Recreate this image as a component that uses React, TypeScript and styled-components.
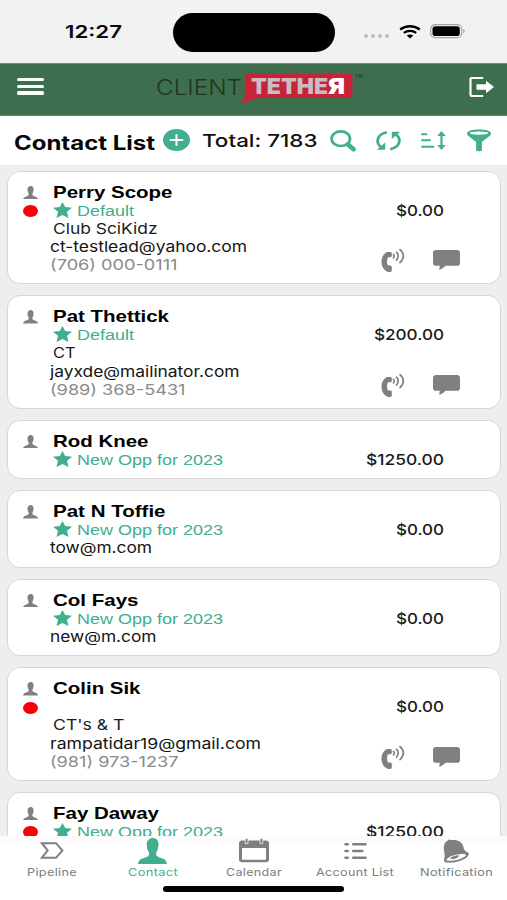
import React, { useLayoutEffect, useRef, useState } from 'react';
import styled, { createGlobalStyle, css } from 'styled-components';

const TEAL = '#41ae8f';
const GRAY = '#808080';

const GlobalStyle = createGlobalStyle`
  *, *::before, *::after { box-sizing: border-box; }
  body { margin: 0; background: #eeeeee; font-family: Inter, "Liberation Sans", sans-serif; }
  svg { display: block; flex: none; }
`;

/* ---------- text set to a fixed measure ---------- */

const Measure = styled.span<{ $w: number }>`
  display: block;
  width: ${(p) => p.$w}px;
  white-space: nowrap;
  flex: none;
`;

const Stretch = styled.span`
  display: inline-block;
  transform-origin: 0 50%;
  white-space: pre;
`;

function Fit({ w, children, className }: { w: number; children: React.ReactNode; className?: string }) {
  const ref = useRef<HTMLSpanElement>(null);
  const [scale, setScale] = useState(1);
  useLayoutEffect(() => {
    if (ref.current && ref.current.offsetWidth) {
      const natural = parseFloat(getComputedStyle(ref.current).width);
      setScale(w / natural);
    }
  }, [w]);
  return (
    <Measure $w={w} className={className}>
      <Stretch ref={ref} style={{ transform: `scaleX(${scale})` }}>{children}</Stretch>
    </Measure>
  );
}

/* ---------- layout ---------- */

const Phone = styled.div`
  width: 507px;
  height: 900px;
  display: flex;
  flex-direction: column;
  overflow: hidden;
  background: #eeeeee;
  color: #111;
`;

const StatusBar = styled.div`
  height: 63px;
  flex: none;
  display: flex;
  align-items: center;
  background: #f2f2f2;
  padding-left: 65px;
`;

const Clock = styled(Fit)`
  font-size: 17.5px;
  font-weight: 600;
  line-height: 24px;
  margin-top: 1px;
  color: #0a0a0a;
`;

const Island = styled.div`
  width: 162px;
  height: 39px;
  margin-left: 51px;
  margin-top: 1px;
  border-radius: 20px;
  background: #000;
`;

const StatusIcons = styled.div`
  display: flex;
  align-items: center;
  margin-left: 28px;
`;

const Dots = styled.div`
  display: flex;
  gap: 2.8px;
  margin: 9px 9.5px 0 1px;
`;

const Dot = styled.i`
  width: 4.2px;
  height: 4px;
  border-radius: 50%;
  background: #bdbdbd;
`;

const Header = styled.header`
  height: 53px;
  flex: none;
  display: flex;
  align-items: flex-start;
  background: #3d6f4e;
  border-top: 1px solid #6d967b;
  border-bottom: 1px solid #62896f;
  padding: 0 13px 0 17px;
`;

const MenuButton = styled.div`
  width: 27px;
  margin-top: 14px;
  display: grid;
  gap: 3.2px;
`;

const MenuLine = styled.i`
  height: 3.4px;
  border-radius: 1.5px;
  background: #fff;
`;

const Logo = styled.div`
  display: flex;
  align-items: flex-start;
  margin-left: 111.5px;
`;

const LogoClient = styled(Fit)`
  margin-top: 8.5px;
  font-size: 22px;
  font-weight: 300;
  line-height: 28px;
  color: #26331f;
`;

const LogoBubble = styled.div`
  display: grid;
  margin: 9px 0 0 -3px;
  > * { grid-area: 1 / 1; }
`;

const LogoTether = styled.div`
  display: flex;
  padding: 0 0 0 12.5px;
  font-size: 21.5px;
  line-height: 27px;
  font-weight: 900;
  color: #c8bcc6;
`;

const LogoLetter = styled(Fit)`
  color: #fff;
`;

const Trademark = styled(Fit)`
  margin: 9px 0 0 1px;
  font-size: 5px;
  font-weight: 600;
  line-height: 6px;
  color: #27432f;
`;

const HeaderAction = styled.div`
  margin: 11.5px 0 0 auto;
`;

const Toolbar = styled.div`
  height: 49px;
  flex: none;
  display: flex;
  align-items: center;
  background: #fff;
  padding-left: 14px;
`;

const Title = styled(Fit)`
  font-size: 19.4px;
  font-weight: 700;
  line-height: 24px;
  margin-top: 4px;
  color: #050505;
`;

const Total = styled(Fit)`
  font-size: 17.8px;
  font-weight: 500;
  line-height: 24px;
  margin-left: 12px;
  color: #111;
`;

const Tool = styled.div<{ $gap: number }>`
  margin-left: ${(p) => p.$gap}px;
`;

const List = styled.main`
  flex: 1;
  min-height: 0;
  overflow: hidden;
  display: flex;
  flex-direction: column;
  gap: 11.1px;
  padding: 5.5px 6.5px 0 7px;
`;

const Card = styled.article`
  flex: none;
  display: flex;
  border: 1.4px solid #d6d6d6;
  border-radius: 13px;
  background: #fff;
  padding: 11px 0 9px 14.5px;
`;

const Marks = styled.div`
  width: 28px;
  padding: 3px 0 0 0.5px;
  display: flex;
  flex-direction: column;
  gap: 6px;
`;

const Unread = styled.i`
  width: 14.5px;
  height: 12px;
  border-radius: 50%;
  background: #fb0007;
`;

const Info = styled.div`
  width: 290px;
`;

const Name = styled(Fit)`
  height: 19.2px;
  padding-left: 2px;
  font: 700 17px/19px "Liberation Sans", Arial, sans-serif;
  color: #000;
`;

const line = css`
  height: 18.1px;
  font-size: 14.8px;
  line-height: 18px;
`;

const Stage = styled.div`
  ${line}
  display: flex;
  gap: 5px;
  padding-left: 2px;
  color: ${TEAL};
`;

const StageLabel = styled(Fit)`
  font: 400 15.2px/18px "Liberation Sans", Arial, sans-serif;
`;

const Company = styled(Fit)`
  ${line}
  padding-left: 2px;
  color: #1c1c1c;
`;

const Email = styled(Fit)`
  ${line}
  margin-left: -1px;
  color: #141414;
`;

const PhoneNumber = styled(Fit)`
  ${line}
  margin-left: -1px;
  color: #8a8a8a;
`;

const Side = styled.div`
  flex: 1;
  padding-top: 19px;
`;

const Amount = styled(Fit)`
  font-size: 14.8px;
  font-weight: 500;
  line-height: 18px;
  margin-left: auto;
  margin-right: 55.5px;
  color: #1a1a1a;
`;

const Actions = styled.div`
  display: flex;
  align-items: flex-start;
  justify-content: flex-end;
  gap: 27px;
  padding-right: 39.5px;
  margin-top: 28.5px;
  height: 0;
`;

const ChatAction = styled.div`
  margin-top: 2px;
`;

const TabBar = styled.nav`
  height: 64px;
  flex: none;
  background: linear-gradient(#fafafa, #fff 12px);
  display: flex;
  flex-direction: column;
  align-items: center;
`;

const Tabs = styled.div`
  width: 100%;
  height: 50px;
  display: grid;
  grid-template-columns: repeat(5, 1fr);
  padding-left: 1px;
`;

const Tab = styled.div<{ $active?: boolean }>`
  display: flex;
  flex-direction: column;
  align-items: center;
  color: ${(p) => (p.$active ? TEAL : '#7b7b7b')};
`;

const TabIcon = styled.div`
  height: 29px;
  display: flex;
  align-items: center;
`;

const TabLabel = styled(Fit)`
  font: 400 10.9px/14px Inter, sans-serif;
  letter-spacing: 0.3px;
  color: inherit;
`;

const HomeIndicator = styled.div`
  width: 181px;
  height: 5.5px;
  border-radius: 3px;
  background: #000;
`;

/* ---------- icons ---------- */

const Person = ({ w, h, fill }: { w: number; h: number; fill: string }) => (
  <svg width={w} height={h} viewBox="0 0 29 26" preserveAspectRatio="none" fill={fill}>
    <path d="M15 0c3.600 0 5.500 2.800 5.500 6.300 0 3.600-.9 6.200-2.300 8.100v2.200c0 1.500 1.200 2.200 3.400 2.900 4.200 1.200 6.900 2.300 7.400 6.500H0c.5-4.200 3.200-5.300 7.400-6.500 2.300-.7 3.600-1.400 3.600-2.900v-2.200C9.500 12.500 8.700 10 8.700 6.300 8.700 2.500 11.400 0 15 0z" />
  </svg>
);

const Star = () => (
  <svg width="19" height="16" viewBox="0 0 19 16" fill={TEAL}>
    <path d="M9.500 0l2.700 5 6.800.7-5 4.100 1.500 6.100-6-2.900-6 2.900L5 9.800 0 5.700 6.800 5z" />
  </svg>
);

const CallIcon = () => (
  <svg width="25" height="25" viewBox="0 0 25 25" fill="none">
    <path d="M6 4h3.300c.9 0 1.500.7 1.500 1.500v2.300c0 .9-.8 1.500-1.600 1.500H7c-1.300 2.300-1.300 6 0 8.200h2.200c.9 0 1.600.7 1.600 1.500v3.200c0 1-.7 1.700-1.700 1.700H7C-1.500 21-1.500 7.500 6 4z" fill={GRAY} />
    <path d="M12.500 6.300c1 .9 1 2.500 0 3.600M15.500 4.200c2.200 2 2.200 5.500 0 7.900M19 1.600c4.400 3.600 4.400 9.200 0 13" stroke={GRAY} strokeWidth="1.700" strokeLinecap="round" />
  </svg>
);

const ChatIcon = () => (
  <svg width="27" height="20" viewBox="0 0 27 20" fill={GRAY}>
    <path d="M3 0h21c1.700 0 3 1 3 2.600v10.600c0 1.600-1.300 2.600-3 2.600H12.500C10.500 18 8.500 19 6.300 20l.4-4.200H3c-1.700 0-3-1-3-2.600V2.600C0 1 1.300 0 3 0z" />
  </svg>
);

const Wifi = () => (
  <svg width="22" height="14" viewBox="0 0 22 14" fill="none" stroke="#000">
    <path d="M1.200 4.500c5.600-4.400 14-4.400 19.600 0" strokeWidth="2.400" />
    <path d="M4.800 7.900c3.600-2.700 8.800-2.700 12.400 0" strokeWidth="2.300" />
    <path d="M7.700 10.500c1.900-1.500 4.700-1.500 6.600 0L11 13.500z" fill="#000" stroke="none" />
  </svg>
);

const Battery = () => (
  <svg width="36" height="15" viewBox="0 0 36 15">
    <rect x=".7" y=".7" width="31" height="13" rx="4.300" fill="none" stroke="#a5a5a5" strokeWidth="1.200" />
    <rect x="2.500" y="2.300" width="27.300" height="9.800" rx="2.800" fill="#000" />
    <path d="M33.300 5.200c1.800.4 1.800 3.600 0 4z" fill="#999" />
  </svg>
);

const Bubble = () => (
  <svg width="115" height="32" viewBox="0 0 115 32">
    <path d="M8.500 1h102c2 0 3 1 3 3v18c0 2-1 3-3 3H19C13 27 7 29 0 31c4-3 6-6 5.800-10V3c0-1.300.7-2 2.700-2z" fill="#c82336" />
  </svg>
);

const Logout = () => (
  <svg width="25" height="22" viewBox="0 0 25 22" fill="none">
    <path d="M14.200 2H2.800C2 2 1.500 2.500 1.500 3.200v15.600c0 .7.500 1.200 1.300 1.200h11.400" stroke="#fff" strokeWidth="2.200" />
    <path d="M7.500 8.200h9.500V4.800L25 11l-8 6.200v-3.400H7.500z" fill="#fff" />
  </svg>
);

const Add = () => (
  <svg width="27" height="23" viewBox="0 0 27 23">
    <ellipse cx="13.500" cy="11" rx="13.500" ry="11" fill={TEAL} />
    <path d="M6.800 11h13.400M13.500 5.200v11.600" stroke="#fff" strokeWidth="2" />
  </svg>
);

const Search = () => (
  <svg width="26" height="22" viewBox="0 0 26 22" fill="none" stroke={TEAL}>
    <ellipse cx="10.800" cy="8.700" rx="9.200" ry="7.300" strokeWidth="2.700" />
    <path d="M18 14.500l5.500 4.700" strokeWidth="4.600" strokeLinecap="round" />
  </svg>
);

const Sync = () => (
  <svg width="25" height="20" viewBox="0 0 25 20" fill="none">
    <path d="M10.800 1.300C.7 3.500-1 11.500 5.500 16.500M14.200 18.200C24.300 16 26 8 19.500 3" stroke={TEAL} strokeWidth="2.700" />
    <path d="M9.200 11.500v7.300H.8zM15.800 8V.7h8.400z" fill={TEAL} />
  </svg>
);

const Sort = () => (
  <svg width="25" height="19" viewBox="0 0 25 19" fill="none">
    <path d="M1 3.200h4.500M1 9.300h8M1 15.800h11.500" stroke={TEAL} strokeWidth="1.900" strokeLinecap="round" />
    <path d="M20.500 3v13" stroke={TEAL} strokeWidth="2.200" />
    <path d="M20.500 0l4.300 5h-8.600zM20.500 19l4.300-5h-8.600z" fill={TEAL} />
  </svg>
);

const Funnel = () => (
  <svg width="24" height="23" viewBox="0 0 24 23">
    <path d="M0 4.500C0 2 5 .5 12 .5s12 1.500 12 4c0 1-.6 1.700-1.500 2.500l-7.600 6v8.500c0 1-5.800 1-5.800 0V13L1.500 7C.6 6.200 0 5.500 0 4.500z" fill={TEAL} />
    <ellipse cx="12" cy="4.200" rx="9.400" ry="1.600" fill="#fff" />
  </svg>
);

const Pipeline = () => (
  <svg width="24" height="17" viewBox="0 0 24 17" fill="none" stroke={GRAY} strokeWidth="2">
    <path d="M1.800 1.200H16l6.400 7.300-6.400 7.300H1.800l5.900-7.300z" />
  </svg>
);

const Calendar = () => (
  <svg width="30" height="25" viewBox="0 0 30 25" fill={GRAY}>
    <path d="M3 2.500h24c1.700 0 3 1 3 2.500v16.700c0 1.500-1.300 2.500-3 2.500H3c-1.700 0-3-1-3-2.500V5C0 3.500 1.300 2.500 3 2.500zm0 7.500v11c0 .4.300.7.800.7h22.400c.5 0 .8-.3.8-.7V10z" fillRule="evenodd" />
    <path d="M6.200.5h2.800v5H6.200zM21 .5h2.800v5H21z" stroke="#fff" strokeWidth=".7" />
  </svg>
);

const ListIcon = () => (
  <svg width="23" height="18" viewBox="0 0 23 18" stroke={GRAY} strokeWidth="2.600" strokeLinecap="round">
    <path d="M1.500 2.200h2.200M9.300 2.200h12.200M1.500 9h2.200M9.300 9h9M1.500 15.800h2.200M9.300 15.800h12.200" />
  </svg>
);

const Bell = () => (
  <svg width="26" height="24" viewBox="0 0 26 24">
    <path d="M4.800 1.500C5.500.2 7 .3 7.700 1.200c5.800-1.200 11.500 1.200 12.600 6.300.5 2.500 1.300 4.700 4.200 5.700 2 .7 1.500 2.500.3 4C22 21 13 24 5 23.600c-3 0-4.400-1-4-3 .6-2.600 1-4.600.3-7.600C0 8 .8 3.700 4.800 1.500z" fill={GRAY} />
    <path d="M3.600 20.500c2-3.300 12.500-6.700 18.500-5.200 1.600.4.800 1.500-.6 2.400-4.500 3.200-11.800 4.500-16.400 4-1.400-.1-2-.4-1.500-1.200z" fill="#fff" />
    <path d="M7.500 19c2.500-1.800 6-2.800 8.500-2.600-.5 2-3.300 3.500-6 3.600-1.600.1-3-.2-2.500-1z" fill={GRAY} />
  </svg>
);

/* ---------- data ---------- */

type Line = [text: string, width: number];

interface Contact {
  name: Line;
  amount: Line;
  stage?: Line;
  company?: Line;
  email?: Line;
  phone?: Line;
  unread?: boolean;
}

const contacts: Contact[] = [
  { name: ['Perry Scope', 119.5], amount: ['$0.00', 48], stage: ['Default', 57], company: ['Club SciKidz', 104.5], email: ['ct-testlead@yahoo.com', 197], phone: ['(706) 000-0111', 127.5], unread: true },
  { name: ['Pat Thettick', 116], amount: ['$200.00', 70], stage: ['Default', 57], company: ['CT', 22.5], email: ['jayxde@mailinator.com', 189.5], phone: ['(989) 368-5431', 135.5] },
  { name: ['Rod Knee', 95.5], amount: ['$1250.00', 78], stage: ['New Opp for 2023', 146] },
  { name: ['Pat N Toffie', 112.5], amount: ['$0.00', 48], stage: ['New Opp for 2023', 146], email: ['tow@m.com', 102] },
  { name: ['Col Fays', 85.5], amount: ['$0.00', 48], stage: ['New Opp for 2023', 146], email: ['new@m.com', 106.5] },
  { name: ['Colin Sik', 87.5], amount: ['$0.00', 48], company: ["CT's & T", 71.5], email: ['rampatidar19@gmail.com', 211], phone: ['(981) 973-1237', 128.5], unread: true },
  { name: ['Fay Daway', 106], amount: ['$1250.00', 78], stage: ['New Opp for 2023', 146], unread: true },
];

function ContactCard({ c }: { c: Contact }) {
  return (
    <Card>
      <Marks>
        <Person w={15} h={13.5} fill={GRAY} />
        {c.unread && <Unread />}
      </Marks>
      <Info>
        <Name w={c.name[1]}>{c.name[0]}</Name>
        <Stage>
          {c.stage && <Star />}
          {c.stage && <StageLabel w={c.stage[1]}>{c.stage[0]}</StageLabel>}
        </Stage>
        {c.company && <Company w={c.company[1]}>{c.company[0]}</Company>}
        {c.email && <Email w={c.email[1]}>{c.email[0]}</Email>}
        {c.phone && <PhoneNumber w={c.phone[1]}>{c.phone[0]}</PhoneNumber>}
      </Info>
      <Side>
        <Amount w={c.amount[1]}>{c.amount[0]}</Amount>
        {c.phone && (
          <Actions>
            <CallIcon />
            <ChatAction><ChatIcon /></ChatAction>
          </Actions>
        )}
      </Side>
    </Card>
  );
}

const tabs = [
  { label: 'Pipeline', w: 50, icon: <Pipeline /> },
  { label: 'Contact', w: 50, icon: <Person w={29} h={26} fill={TEAL} />, active: true },
  { label: 'Calendar', w: 56, icon: <Calendar /> },
  { label: 'Account List', w: 78, icon: <ListIcon /> },
  { label: 'Notification', w: 73, icon: <Bell /> },
];

export default function App() {
  return (
    <Phone>
      <GlobalStyle />
      <StatusBar>
        <Clock w={57}>12:27</Clock>
        <Island />
        <StatusIcons>
          <Dots><Dot /><Dot /><Dot /><Dot /></Dots>
          <Wifi />
          <Tool $gap={9}><Battery /></Tool>
        </StatusIcons>
      </StatusBar>
      <Header>
        <MenuButton><MenuLine /><MenuLine /><MenuLine /></MenuButton>
        <Logo>
          <LogoClient w={86}>CLIENT</LogoClient>
          <LogoBubble>
            <Bubble />
            <LogoTether>
              <Fit w={77}>TETHE</Fit>
              <LogoLetter w={17}>Я</LogoLetter>
            </LogoTether>
          </LogoBubble>
          <Trademark w={8}>TM</Trademark>
        </Logo>
        <HeaderAction><Logout /></HeaderAction>
      </Header>
      <Toolbar>
        <Title w={141}>Contact List</Title>
        <Tool $gap={8}><Add /></Tool>
        <Total w={115.5}>Total: 7183</Total>
        <Tool $gap={12}><Search /></Tool>
        <Tool $gap={20.5}><Sync /></Tool>
        <Tool $gap={20}><Sort /></Tool>
        <Tool $gap={20.5}><Funnel /></Tool>
      </Toolbar>
      <List>
        {contacts.map((c) => <ContactCard key={c.name[0]} c={c} />)}
      </List>
      <TabBar>
        <Tabs>
          {tabs.map((t) => (
            <Tab key={t.label} $active={t.active}>
              <TabIcon>{t.icon}</TabIcon>
              <TabLabel w={t.w}>{t.label}</TabLabel>
            </Tab>
          ))}
        </Tabs>
        <HomeIndicator />
      </TabBar>
    </Phone>
  );
}
